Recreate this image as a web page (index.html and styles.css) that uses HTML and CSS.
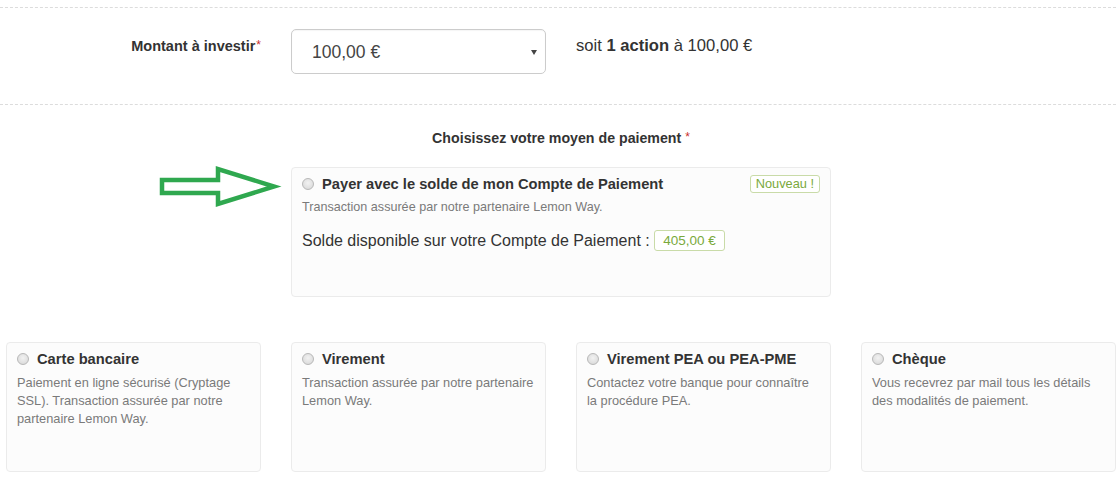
FILE: index.html
```html
<!DOCTYPE html>
<html lang="fr">
<head>
<meta charset="utf-8">
<title>Investir</title>
<link rel="stylesheet" href="styles.css">
</head>
<body>
<div class="page">
  <div class="sep sep-top"></div>
  <div class="grid amount-row">
    <label class="amount-label">Montant à investir<span class="req">*</span></label>
    <div class="select">
      <span class="select-value">100,00 €</span>
      <span class="caret"></span>
    </div>
    <div class="amount-info">soit <strong>1 action</strong> à 100,00 €</div>
  </div>
  <div class="sep"></div>

  <div class="grid heading-row">
    <h3 class="heading">Choisissez votre moyen de paiement <span class="req">*</span></h3>
  </div>

  <div class="grid featured-row">
    <svg class="arrow" width="124" height="48" viewBox="0 0 124 48">
      <polygon points="4,17 60,17 60,6 116,23.5 60,41 60,30 4,30" fill="none" stroke="#2fa84f" stroke-width="4.5" stroke-linejoin="miter"/>
    </svg>
    <div class="card card-featured">
      <div class="card-head">
        <span class="radio"></span>
        <span class="card-title">Payer avec le solde de mon Compte de Paiement</span>
        <span class="badge badge-new">Nouveau !</span>
      </div>
      <p class="card-desc">Transaction assurée par notre partenaire Lemon Way.</p>
      <p class="balance">Solde disponible sur votre Compte de Paiement : <span class="badge badge-amount">405,00 €</span></p>
    </div>
  </div>

  <div class="grid methods-row">
    <div class="card">
      <div class="card-head"><span class="radio"></span><span class="card-title">Carte bancaire</span></div>
      <p class="card-desc">Paiement en ligne sécurisé (Cryptage SSL). Transaction assurée par notre partenaire Lemon Way.</p>
    </div>
    <div class="card">
      <div class="card-head"><span class="radio"></span><span class="card-title">Virement</span></div>
      <p class="card-desc">Transaction assurée par notre partenaire Lemon Way.</p>
    </div>
    <div class="card">
      <div class="card-head"><span class="radio"></span><span class="card-title">Virement PEA ou PEA-PME</span></div>
      <p class="card-desc">Contactez votre banque pour connaître la procédure PEA.</p>
    </div>
    <div class="card">
      <div class="card-head"><span class="radio"></span><span class="card-title">Chèque</span></div>
      <p class="card-desc">Vous recevrez par mail tous les détails des modalités de paiement.</p>
    </div>
  </div>
</div>
</body>
</html>
```

FILE: styles.css
```css
* { box-sizing: border-box; }

html, body {
  margin: 0;
  padding: 0;
  background: #ffffff;
}

body {
  font-family: "Liberation Sans", Arial, Helvetica, sans-serif;
  font-size: 14px;
  line-height: 20px;
  color: #333333;
}

.page {
  width: 1116px;
  overflow: hidden;
}

.grid {
  display: grid;
  grid-template-columns: repeat(4, 255px);
  column-gap: 30px;
  padding-left: 6px;
}

.sep {
  border-top: 1px dashed #dcdcdc;
  height: 0;
}

.sep-top {
  margin-top: 7px;
}

.amount-row {
  align-items: start;
  padding-top: 21px;
  padding-bottom: 30px;
}

.amount-label {
  text-align: right;
  font-weight: bold;
  font-size: 14.5px;
  color: #333;
  margin-right: 0;
  padding-top: 7px;
  padding-left: 0;
}

.req {
  color: #c9302c;
  font-weight: normal;
  font-size: 12px;
  vertical-align: top;
  position: relative;
  top: -1px;
  margin-left: 1px;
}

.select {
  height: 45px;
  border: 1px solid #cccccc;
  border-radius: 5px;
  background: #ffffff;
  display: flex;
  align-items: center;
  justify-content: space-between;
  padding: 0 8px 0 20px;
  box-shadow: inset 0 1px 1px rgba(0,0,0,0.04);
}

.select-value {
  font-size: 17.5px;
  color: #444;
}

.caret {
  width: 0;
  height: 0;
  border-left: 3px solid transparent;
  border-right: 3px solid transparent;
  border-top: 5px solid #444;
  margin-top: 2px;
}

.amount-info {
  font-size: 16.6px;
  color: #333;
  padding-top: 7px;
}

.amount-info strong {
  font-weight: bold;
}

.heading-row {
  padding-top: 23px;
  padding-bottom: 19px;
}

.heading {
  grid-column: 2 / 4;
  margin: 0;
  text-align: center;
  font-size: 14.2px;
  font-weight: bold;
  line-height: 20px;
  color: #333;
}

.heading .req {
  margin-left: 0;
}

.featured-row {
  position: relative;
}

.arrow {
  position: absolute;
  left: 158px;
  top: -4px;
}

.card {
  background: #fcfcfc;
  border: 1px solid #ebebeb;
  border-radius: 4px;
  padding: 6px 10px 10px 10px;
  height: 130px;
}

.card-featured {
  grid-column: 2 / 4;
  height: 130px;
  padding-top: 6px;
}

.card-head {
  display: flex;
  align-items: center;
  height: 20px;
}

.radio {
  width: 12px;
  height: 12px;
  border-radius: 50%;
  border: 1px solid #b8b8b8;
  background: radial-gradient(circle at 50% 40%, #f2f2f2 0%, #dedede 70%, #cfcfcf 100%);
  flex: none;
  margin-right: 8px;
}

.card-title {
  font-weight: bold;
  font-size: 14.7px;
  color: #333;
  flex: 1;
}

.badge {
  display: inline-block;
  border: 1px solid #c9dba8;
  border-radius: 3px;
  color: #7aa93c;
  background: #ffffff;
}

.badge-new {
  font-size: 12.8px;
  line-height: 16px;
  padding: 0 5px;
  margin-top: -1px;
}

.card-desc {
  margin: 5px 0 0 0;
  font-size: 12.8px;
  line-height: 18px;
  color: #7a7a7a;
}

.card-featured .card-desc {
  margin-top: 4px;
  font-size: 12.6px;
}

.balance {
  margin: 14px 0 0 0;
  font-size: 16px;
  line-height: 22px;
  color: #333;
}

.badge-amount {
  font-size: 13.5px;
  line-height: 19px;
  padding: 0 8px;
  vertical-align: middle;
  margin-top: -2px;
}

.methods-row {
  margin-top: 45px;
}
```
